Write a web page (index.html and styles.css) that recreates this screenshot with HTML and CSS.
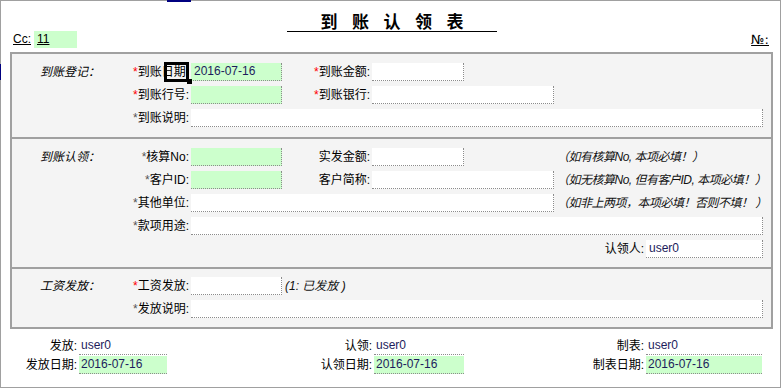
FILE: index.html
```html
<!DOCTYPE html>
<html lang="zh-CN">
<head>
  <meta charset="UTF-8">
  <title>到账认领表</title>
  <link rel="stylesheet" href="styles.css">
</head>
<body>
  <div class="page">
    <h1 class="title">到账认领表</h1>

    <div class="meta">
      <span class="cc"><u>Cc:</u> <span class="cc-val"><u>11</u></span></span>
      <span class="no">№:</span>
    </div>

    <div class="form">
      <!-- 到账登记 -->
      <div class="sec">
        <div class="sec-name">到账登记：</div>
        <div class="lbl c2"><i class="req">*</i>到账日期:</div>
        <div class="fld green">2016-07-16</div>
        <div class="lbl c4"><i class="req">*</i>到账金额:</div>
        <div class="fld"></div>

        <div class="lbl c2"><i class="req">*</i>到账行号:</div>
        <div class="fld green"></div>
        <div class="lbl c4"><i class="req">*</i>到账银行:</div>
        <div class="fld span-5-7"></div>

        <div class="lbl c2"><i class="opt">*</i>到账说明:</div>
        <div class="fld span-3-9"></div>
      </div>

      <!-- 到账认领 -->
      <div class="sec">
        <div class="sec-name">到账认领：</div>
        <div class="lbl c2"><i class="opt">*</i>核算No:</div>
        <div class="fld green"></div>
        <div class="lbl c4">实发金额:</div>
        <div class="fld"></div>
        <div class="hint c7">（如有核算No, 本项必填！）</div>

        <div class="lbl c2"><i class="opt">*</i>客户ID:</div>
        <div class="fld green"></div>
        <div class="lbl c4">客户简称:</div>
        <div class="fld span-5-7"></div>
        <div class="hint c7">（如无核算No, 但有客户ID, 本项必填！）</div>

        <div class="lbl c2"><i class="opt">*</i>其他单位:</div>
        <div class="fld span-3-7"></div>
        <div class="hint c7">（如非上两项，本项必填！否则不填！ ）</div>

        <div class="lbl c2"><i class="opt">*</i>款项用途:</div>
        <div class="fld span-3-9"></div>

        <div class="lbl c7">认领人:</div>
        <div class="fld">user0</div>
      </div>

      <!-- 工资发放 -->
      <div class="sec">
        <div class="sec-name">工资发放：</div>
        <div class="lbl c2"><i class="req">*</i>工资发放:</div>
        <div class="fld"></div>
        <div class="hint c4 short">(1: 已发放 )</div>

        <div class="lbl c2"><i class="opt">*</i>发放说明:</div>
        <div class="fld span-3-9"></div>
      </div>
    </div>

    <div class="foot">
      <div class="lbl">发放:</div>
      <div class="val">user0</div>
      <div class="lbl">认领:</div>
      <div class="val">user0</div>
      <div class="lbl">制表:</div>
      <div class="val">user0</div>

      <div class="lbl">发放日期:</div>
      <div class="val green">2016-07-16</div>
      <div class="lbl">认领日期:</div>
      <div class="val green">2016-07-16</div>
      <div class="lbl">制表日期:</div>
      <div class="val green">2016-07-16</div>
    </div>
  </div>

  <!-- designer selection marks -->
  <div class="ruler-top"></div>
  <div class="ruler-left"></div>
  <div class="focus"><span class="handle"></span></div>
</body>
</html>
```

FILE: styles.css
```css
body {
  margin: 0;
  position: relative;
  font-family: "Liberation Sans", "Noto Sans CJK SC", sans-serif;
  font-size: 12px;
  color: #000;
  background: #fff;
}
.page {
  width: 781px;
  height: 388px;
  box-sizing: border-box;
  border: 1px solid #a0a0a0;
}
.title {
  width: 210px;
  margin: 10px 0 0 286px;
  border-bottom: 1px solid #000;
  font-family: "Noto Sans CJK SC", sans-serif;
  font-size: 17px;
  font-weight: bold;
  line-height: 20px;
  text-align: center;
  letter-spacing: 14.5px;
  text-indent: 14.5px;
}
.meta {
  display: flex;
  justify-content: space-between;
  align-items: center;
  height: 17px;
  line-height: 17px;
  margin-top: -1px;
  padding: 0 11px 0 12px;
}
.cc {
  display: flex;
  align-items: center;
}
.cc-val {
  width: 40px;
  height: 17px;
  margin-left: 3px;
  padding-left: 3px;
  background: #ccffcc;
}
.no {
  font-family: "DejaVu Sans", sans-serif;
  font-size: 13px;
  text-decoration: underline;
}
.form {
  margin: 4px 7px 0 9px;
  border: 2px solid #a0a0a0;
  background: #f4f4f4;
}
.sec {
  display: grid;
  grid-template-columns: 115px 64px 91px 90px 92px 90px 92px 117px;
  grid-auto-rows: 18px;
  row-gap: 5px;
  line-height: 18px;
  padding: 9px 0 10px;
}
.sec + .sec {
  border-top: 2px solid #a0a0a0;
  padding-bottom: 9px;
}
.sec:last-child {
  padding-top: 8px;
}
.sec-name {
  grid-column: 1;
  padding-left: 28px;
  font-style: italic;
  white-space: nowrap;
}
.lbl {
  text-align: right;
  padding-right: 2px;
  white-space: nowrap;
}
.lbl i {
  font-style: normal;
}
.req {
  color: #ff0000;
}
.opt {
  color: #555;
}
.c2 { grid-column: 2; }
.c4 { grid-column: 4; }
.c7 { grid-column: 7; }
.span-5-7 { grid-column: 5 / 7; }
.span-3-7 { grid-column: 3 / 7; }
.span-3-9 { grid-column: 3 / 9; }
.fld {
  height: 18px;
  box-sizing: border-box;
  padding-left: 3px;
  line-height: 17px;
  background: #fff;
  border-right: 1px dotted #8c8c8c;
  border-bottom: 1px dotted #8c8c8c;
  color: #1c1c5c;
  white-space: nowrap;
}
.green {
  background: #ccffcc;
}
.hint {
  padding-left: 3px;
  font-style: italic;
  letter-spacing: -0.5px;
  white-space: nowrap;
  color: #111;
}
.hint.short {
  letter-spacing: 0;
}
.foot {
  display: grid;
  grid-template-columns: 78px 88px 207px 90px 182px 116px;
  grid-auto-rows: 18px;
  row-gap: 1px;
  line-height: 18px;
  margin-top: 8px;
}
.foot .lbl {
  padding-right: 2px;
}
.val {
  height: 18px;
  box-sizing: border-box;
  padding-left: 2px;
  line-height: 17px;
  border-bottom: 1px dotted #8c8c8c;
  color: #1c1c5c;
}
.ruler-top {
  position: absolute;
  left: 167px;
  top: 0;
  width: 24px;
  height: 2px;
  background: #000080;
}
.ruler-left {
  position: absolute;
  left: 0;
  top: 64px;
  width: 1px;
  height: 16px;
  background: #000080;
}
.focus {
  position: absolute;
  left: 164px;
  top: 62px;
  width: 25px;
  height: 20px;
  box-sizing: border-box;
  border: 3px solid #000;
}
.handle {
  position: absolute;
  right: -6px;
  bottom: -5px;
  width: 5px;
  height: 5px;
  background: #000;
}
```
